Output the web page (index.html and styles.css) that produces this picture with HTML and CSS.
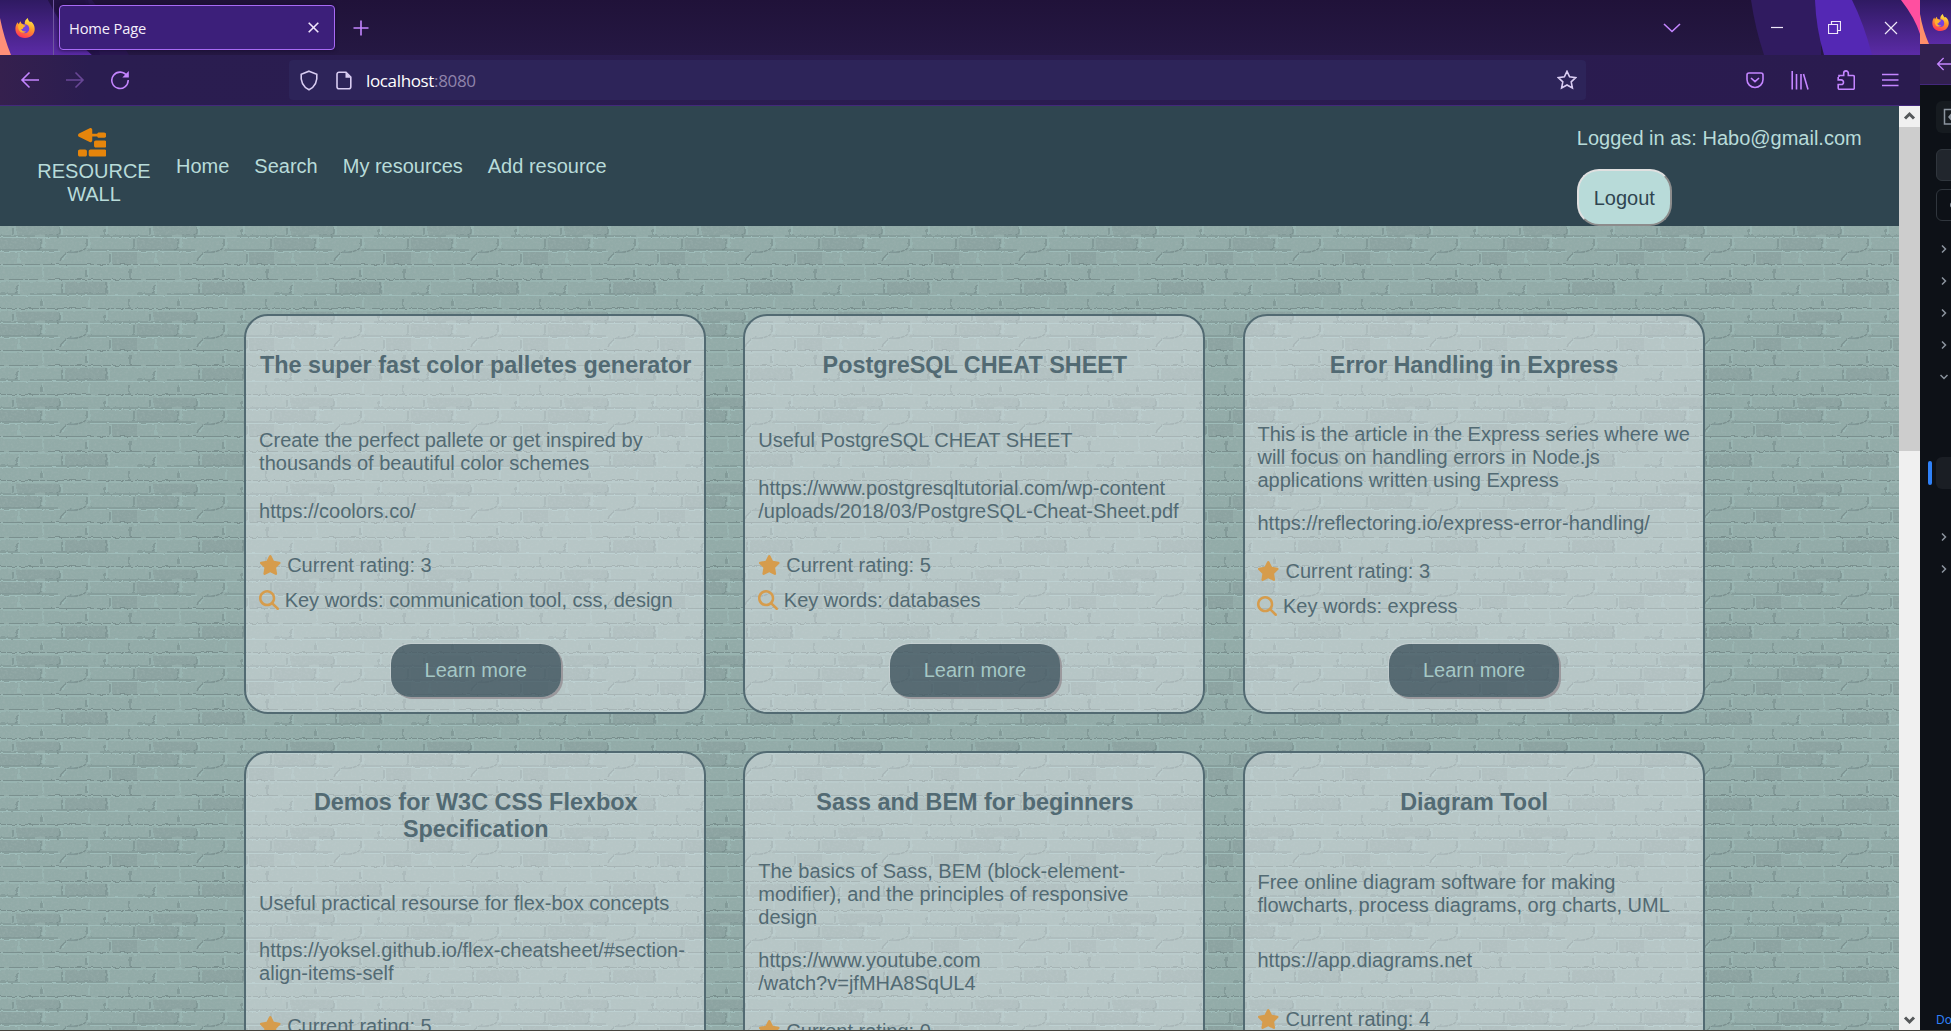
FILE: index.html
```html
<!DOCTYPE html>
<html lang="en">
<head>
<meta charset="utf-8">
<title>Home Page</title>
<link rel="stylesheet" href="styles.css">
</head>
<body>
<svg class="defs" aria-hidden="true">
  <defs>
    <linearGradient id="flame" x1="0.7" y1="0" x2="0.3" y2="1">
      <stop offset="0" stop-color="#fff04a"/><stop offset="0.45" stop-color="#ff9a2a"/><stop offset="1" stop-color="#ff2f5c"/>
    </linearGradient>
    <linearGradient id="violet" x1="0" y1="0" x2="0" y2="1"><stop offset="0" stop-color="#2f1a62"/><stop offset="1" stop-color="#5b2ba6"/></linearGradient>
    <symbol id="firefox" viewBox="0 0 20 20">
      <path fill="url(#flame)" d="M10 20C4 20 .4 16 .4 10.800c0-2.800.8-4.800 2.200-6.600l.9 2L5.400 3.300l1.200 2.500 3.200.4C9.400 3.600 10.600 1.300 12.800 0c.2 2 1 2.800 2.300 4l.9-.4c2.400 2 3.700 4.400 3.700 7.400C19.700 16.200 15.800 20 10 20z"/>
      <circle cx="9.800" cy="10.800" r="4.500" fill="#7442e0"/>
      <path fill="#ffb02e" d="M3.300 6.600C5 5.300 7 5.800 8 7c1 .3 2 .2 2.600.5-.5 1.200-2 1.600-2.500 2.400 0 1-1 1.100-2 1.200.8 2.200 3 2.900 5 2.300-2 2-5.200 1.600-6.800-.6-1.200-1.700-1.500-4-1-6.200z"/>
    </symbol>
    <symbol id="star" viewBox="0 0 576 512"><path fill="currentColor" d="M316.900 18C311.600 7 300.400 0 288.100 0s-23.400 7-28.800 18L195 150.300 51.400 171.500c-12 1.800-22 10.200-25.700 21.700s-.7 24.200 7.900 32.700L137.800 329 113.200 474.700c-2 12 3 24.200 12.900 31.300s23 8 33.800 2.300l128.300-68.500 128.300 68.500c10.800 5.700 23.900 4.900 33.800-2.300s14.900-19.300 12.900-31.300L438.500 329 542.700 225.900c8.600-8.500 11.700-21.200 7.900-32.700s-13.700-19.900-25.700-21.700L381.200 150.300 316.900 18z"/></symbol>
    <symbol id="search" viewBox="0 0 512 512"><path fill="currentColor" d="M416 208c0 45.900-14.900 88.300-40 122.700L502.600 457.400c12.500 12.500 12.500 32.800 0 45.300s-32.800 12.500-45.300 0L330.700 376c-34.400 25.200-76.800 40-122.700 40C93.100 416 0 322.900 0 208S93.100 0 208 0S416 93.100 416 208zM208 352a144 144 0 1 0 0-288 144 144 0 1 0 0 288z"/></symbol>
    <symbol id="arrow" viewBox="0 0 20 20"><path d="M19 10H2M9.500 2.500L2 10l7.500 7.500"/></symbol>
  </defs>
</svg>
<div class="desktop">
  <div class="browser">
    <div class="tabs">
      <svg class="art" viewBox="0 0 160 55" width="160" height="55">
        <path fill="#2a1750" d="M85 0h7q20 25 37 55H95z"/>
        <path fill="url(#violet)" d="M0 0h48q18 30 44 55H0z"/>
        <path fill="#24134a" opacity=".8" d="M48 0h40l12 55H92Q62 30 48 0z"/>
        <path fill="#ff8f78" d="M0 18q4 20 11 37H0z"/>
      </svg>
      <svg class="art art-right" viewBox="0 0 180 55" width="180" height="55">
        <path fill="#301b60" d="M11 0h70v55H24Q15 28 11 0z"/>
        <path fill="#5428b4" d="M75 0h40l25 55H84Q76 28 75 0z"/>
        <path fill="url(#violet)" d="M112 0h68v55h-48Q124 24 112 0z"/>
        <path fill="#ff4fa0" d="M161 0h19v34Q175 18 161 0z"/>
      </svg>
      <div class="pinned"><svg width="20" height="20"><use href="#firefox"/></svg></div>
      <div class="tab">
        <span>Home Page</span>
        <svg class="line" width="11" height="11" viewBox="0 0 11 11"><path d="M.7.700l9.600 9.600M10.300.7L.7 10.300"/></svg>
      </div>
      <svg class="line plus" width="16" height="16" viewBox="0 0 16 16"><path d="M8 .5v15M.5 8h15"/></svg>
      <div class="window-controls">
        <svg class="line" width="18" height="10" viewBox="0 0 18 10"><path d="M1 1l8 7.500L17 1"/></svg>
        <svg class="line" width="12" height="12" viewBox="0 0 12 12"><path d="M0 5.500h12"/></svg>
        <svg class="line" width="13" height="13" viewBox="0 0 13 13"><path d="M3.500 3.500v-3h9v9h-3M.5 3.500h9v9h-9z"/></svg>
        <svg class="line" width="14" height="14" viewBox="0 0 14 14"><path d="M1 1l12 12M13 1L1 13"/></svg>
      </div>
    </div>
    <div class="toolbar">
      <div class="nav-buttons">
        <svg width="20" height="20"><use href="#arrow"/></svg>
        <svg class="dim flip" width="20" height="20"><use href="#arrow"/></svg>
        <svg width="20" height="20" viewBox="0 0 20 20"><path d="M17 6A8.200 8.200 0 1 0 18.200 10"/><path class="solid" d="M18.800 1v6.500h-6.500z"/></svg>
      </div>
      <div class="url">
        <svg width="20" height="21" viewBox="0 0 20 21"><path d="M10 1.200l7.800 3c.7 6.500-1.300 12.500-7.800 15.600C3.500 16.700 1.500 10.700 2.200 4.200z"/></svg>
        <svg width="16" height="19" viewBox="0 0 16 19"><path d="M3 1.200h7L14.800 6v9.800a2 2 0 0 1-2 2H3a2 2 0 0 1-2-2V3.200a2 2 0 0 1 2-2z"/><path class="solid" d="M9.500 1l5.500 5.700H9.500z"/></svg>
        <span class="address">localhost<span>:8080</span></span>
        <svg class="bookmark" width="20" height="20" viewBox="0 0 20 20"><path d="M10 1.300l2.600 5.500 6.100.8-4.500 4.200 1.200 6.200-5.400-3-5.400 3 1.200-6.200L1.300 7.600l6.100-.8z"/></svg>
      </div>
      <div class="tools">
        <svg width="18" height="17" viewBox="0 0 18 17"><path d="M3 1h12a2 2 0 0 1 2 2v4.500a8 8 0 0 1-16 0V3a2 2 0 0 1 2-2zM5 6l4 3.700L13 6"/></svg>
        <svg width="18" height="19" viewBox="0 0 18 19"><path d="M1.200 0v18.500M5.500 3v15.500M10 3v15.500M12.500 3l4.500 15.500"/></svg>
        <svg width="18" height="20" viewBox="0 0 18 20"><path d="M2 7V5.500h4.700V3.200a2.300 2.300 0 0 1 4.600 0v2.300H16a1.300 1.300 0 0 1 1.300 1.300V18a1.300 1.300 0 0 1-1.300 1.300H2.500A1.300 1.300 0 0 1 1.200 18v-3.500h3a2.300 2.300 0 0 0 0-4.600h-3V7"/></svg>
        <svg width="17" height="14" viewBox="0 0 17 14"><path d="M0 1.500h16.500M0 7h16.500M0 12.500h16.500"/></svg>
      </div>
    </div>
    <div class="viewport">
      <div class="page">
        <header class="site-header">
          <a class="logo"><svg width="28.500" height="28.500" viewBox="0 0 512 512"><path fill="currentColor" d="M240.800 4.800C250.300 10.600 256 20.900 256 32v72h89c3.600-13.800 16.100-24 31-24h88c26.500 0 48 21.500 48 48s-21.500 48-48 48H376c-14.900 0-27.400-10.200-31-24H256v72c0 11.100-5.700 21.400-15.200 27.200s-21.200 6.400-31.100 1.400l-192-96C6.800 151.200 0 140.100 0 128s6.800-23.200 17.700-28.600l192-96c9.900-5 21.700-4.400 31.100 1.400zM288 256c0-17.700 14.300-32 32-32H480c17.700 0 32 14.300 32 32v64c0 17.700-14.300 32-32 32H320c-17.700 0-32-14.300-32-32V256zM32 384h96c17.700 0 32 14.300 32 32v64c0 17.700-14.300 32-32 32H32c-17.700 0-32-14.300-32-32V416c0-17.700 14.300-32 32-32zm192 0H480c17.700 0 32 14.300 32 32v64c0 17.700-14.300 32-32 32H224c-17.700 0-32-14.300-32-32V416c0-17.700 14.300-32 32-32z"/></svg><span>RESOURCE<br>WALL</span></a>
          <nav><a>Home</a><a>Search</a><a>My resources</a><a>Add resource</a></nav>
          <div class="account"><span>Logged in as: Habo@gmail.com</span><button class="logout">Logout</button></div>
        </header>
        <main class="wall">
          <article class="card">
            <h3>The super fast color palletes generator</h3>
            <p>Create the perfect pallete or get inspired by thousands of beautiful color schemes</p>
            <a>https://coolors.co/</a>
            <div class="meta">
              <div><svg class="star"><use href="#star"/></svg> Current rating: 3</div>
              <div><svg class="glass"><use href="#search"/></svg> Key words: communication tool, css, design</div>
            </div>
            <button>Learn more</button>
          </article>
          <article class="card">
            <h3>PostgreSQL CHEAT SHEET</h3>
            <p>Useful PostgreSQL CHEAT SHEET</p>
            <a>https://www.postgresqltutorial.com/wp-content<wbr>/uploads/2018/03/PostgreSQL-Cheat-Sheet.pdf</a>
            <div class="meta">
              <div><svg class="star"><use href="#star"/></svg> Current rating: 5</div>
              <div><svg class="glass"><use href="#search"/></svg> Key words: databases</div>
            </div>
            <button>Learn more</button>
          </article>
          <article class="card">
            <h3>Error Handling in Express</h3>
            <p>This is the article in the Express series where we will focus on handling errors in Node.js applications written using Express</p>
            <a>https://reflectoring.io/express-error-handling/</a>
            <div class="meta">
              <div><svg class="star"><use href="#star"/></svg> Current rating: 3</div>
              <div><svg class="glass"><use href="#search"/></svg> Key words: express</div>
            </div>
            <button>Learn more</button>
          </article>
          <article class="card">
            <h3>Demos for W3C CSS Flexbox Specification</h3>
            <p>Useful practical resourse for flex-box concepts</p>
            <a>https://yoksel.github.io/flex-cheatsheet/#section-<wbr>align-items-self</a>
            <div class="meta">
              <div><svg class="star"><use href="#star"/></svg> Current rating: 5</div>
              <div><svg class="glass"><use href="#search"/></svg> Key words: css</div>
            </div>
            <button>Learn more</button>
          </article>
          <article class="card">
            <h3>Sass and BEM for beginners</h3>
            <p>The basics of Sass, BEM (block-element-modifier), and the principles of responsive design</p>
            <a>https://www.youtube.com<br>/watch?v=jfMHA8SqUL4</a>
            <div class="meta">
              <div><svg class="star"><use href="#star"/></svg> Current rating: 0</div>
              <div><svg class="glass"><use href="#search"/></svg> Key words: css</div>
            </div>
            <button>Learn more</button>
          </article>
          <article class="card">
            <h3>Diagram Tool</h3>
            <p>Free online diagram software for making flowcharts, process diagrams, org charts, UML</p>
            <a>https://app.diagrams.net</a>
            <div class="meta">
              <div><svg class="star"><use href="#star"/></svg> Current rating: 4</div>
              <div><svg class="glass"><use href="#search"/></svg> Key words: design</div>
            </div>
            <button>Learn more</button>
          </article>
        </main>
      </div>
      <div class="scrollbar">
        <svg width="21" height="21" viewBox="0 0 21 21"><path d="M6 12.500l4.500-4.500 4.500 4.500"/></svg>
        <div class="thumb"></div>
        <svg class="down" width="21" height="21" viewBox="0 0 21 21"><path d="M6 8.500l4.500 4.500L15 8.500"/></svg>
      </div>
    </div>
  </div>
  <aside class="neighbor">
    <div class="n-tabs">
      <svg class="art" viewBox="0 0 31 44" width="31" height="44"><rect width="31" height="44" fill="url(#violet)"/><path fill="#ff8f6a" d="M0 14q3 17 9 30H0z"/></svg>
      <svg class="n-fox" width="17" height="17"><use href="#firefox"/></svg>
    </div>
    <div class="n-bar"><svg width="16" height="16"><use href="#arrow"/></svg></div>
    <div class="n-body">
      <div class="box filled"><svg width="16" height="18" viewBox="0 0 16 18"><path d="M16 1.500H1.500v14.500H16M9 5.500L6 9l3 3.500M6 9h8"/></svg></div>
      <div class="box outlined raised"></div>
      <div class="box outlined"><span class="dot"></span></div>
      <ul>
        <li><svg viewBox="0 0 8 8"><path d="M2 .5L5.500 4 2 7.500"/></svg></li>
        <li><svg viewBox="0 0 8 8"><path d="M2 .5L5.500 4 2 7.500"/></svg></li>
        <li><svg viewBox="0 0 8 8"><path d="M2 .5L5.500 4 2 7.500"/></svg></li>
        <li><svg viewBox="0 0 8 8"><path d="M2 .5L5.500 4 2 7.500"/></svg></li>
        <li><svg viewBox="0 0 8 8"><path d="M.5 2L4 5.500 7.500 2"/></svg></li>
      </ul>
      <div class="current"></div>
      <ul>
        <li><svg viewBox="0 0 8 8"><path d="M2 .5L5.500 4 2 7.500"/></svg></li>
        <li><svg viewBox="0 0 8 8"><path d="M2 .5L5.500 4 2 7.500"/></svg></li>
      </ul>
      <span class="doc">Do</span>
    </div>
  </aside>
</div>
</body>
</html>
```
FILE: styles.css
```css
* { box-sizing: border-box; }
body { margin: 0; overflow: hidden; background: #0d1117; }
.defs { position: absolute; width: 0; height: 0; }
button { font: inherit; }
svg { flex: none; }

.desktop { display: flex; width: 1951px; height: 1031px; overflow: hidden; border-bottom: 1px solid #46443f; }
.browser { display: flex; flex-direction: column; width: 1920px; font-family: "Open Sans", "Noto Sans", sans-serif; }

/* Tab strip */
.tabs { position: relative; display: flex; align-items: center; height: 55px; background: linear-gradient(#201239, #251843); }
.tabs > :not(.art) { position: relative; }
.art { position: absolute; left: 0; top: 0; }
.art-right { left: auto; right: 0; }
.line { fill: none; stroke-width: 1.6; }
.pinned { display: flex; align-items: center; width: 54px; height: 55px; padding-left: 15px; border-right: 1px solid #6f55a0; }
.tab { display: flex; align-items: center; justify-content: space-between; width: 276px; height: 45px; margin-left: 5px; padding: 0 15px 0 9px; border: 1px solid #a86af5; border-radius: 4px; background: #3c1f7a; color: #f4eefb; font-size: 14.700px; letter-spacing: -.15px; box-shadow: 0 0 4px #170b30; }
.tab svg { stroke: #f0e6fb; }
.plus { margin-left: 18px; stroke: #c485ff; }
.window-controls { display: flex; align-items: center; margin-left: auto; padding-right: 22px; stroke: #eee8f8; }
.window-controls svg { stroke-width: 1.200; }
.window-controls svg:nth-child(1) { margin-right: 90px; stroke: #c485ff; stroke-width: 1.600; }
.window-controls svg:nth-child(2) { margin-right: 45px; }
.window-controls svg:nth-child(3) { margin-right: 43px; }

/* Navigation toolbar */
.toolbar { display: flex; align-items: center; height: 51px; padding: 0 21px 0 20px; border-bottom: 1px solid #43287c; background: linear-gradient(90deg, #35204e, #2a1d50 90px, #2a1b4f); stroke: #c485ff; stroke-width: 1.600; fill: none; }
.toolbar .solid { fill: #c485ff; stroke: none; }
.nav-buttons { display: flex; gap: 25px; width: 269px; }
.dim { opacity: .4; }
.flip { transform: scaleX(-1); }
.url { display: flex; align-items: center; width: 1297px; height: 40px; padding: 0 9px 0 10px; border-radius: 4px; background: #2d2459; stroke: #d9cdf2; }
.url svg + svg { margin-left: 17px; }
.url .solid { fill: #d9cdf2; }
.address { margin-left: 14px; color: #fff; font-size: 17px; letter-spacing: -.35px; }
.address span { color: #8f83ab; }
.bookmark { margin-left: auto; }
.tools { display: flex; align-items: center; gap: 27.500px; margin-left: auto; }

/* Page */
.viewport { display: flex; flex: 1; min-height: 0; }
.page { width: 1899px; overflow: hidden; font: 20px/23px "Liberation Sans", Arial, sans-serif; color: #2f4550; }
.site-header { display: flex; align-items: center; height: 120px; padding: 1px 37.300px 0 37px; background: #2f4550; color: #b8dbd9; }
.logo { width: 114px; padding-top: 1px; text-align: center; }
.logo svg { display: block; margin: 0 auto 3px; color: #e6850b; position: relative; left: -2px; }
.logo span { display: block; }
.site-header nav { display: flex; gap: 25px; margin-left: 25px; }
.account { display: flex; flex-direction: column; align-items: flex-start; gap: 19px; margin-left: auto; padding-top: 20px; align-self: flex-start; }
.logout { height: 57px; width: 95px; padding: 1px 0 0; border: 2px outset #e0e0e0; border-radius: 22px; background: #b8dbd9; color: #2f4550; }

.wall {
  display: grid; grid-template-columns: repeat(3, 462px); gap: 37px 37.200px; align-content: start;
  height: 1000px; padding: 88px 0 0 244.300px;
  background: #8fa8a5 url("data:image/svg+xml,%3Csvg xmlns='http://www.w3.org/2000/svg' width='137' height='86'%3E%3Cfilter id='n' x='0' y='0' width='1' height='1'%3E%3CfeTurbulence type='fractalNoise' baseFrequency='.35 .5' numOctaves='3' seed='4' stitchTiles='stitch'/%3E%3CfeColorMatrix values='0 0 0 0 .36 0 0 0 0 .46 0 0 0 0 .45 2.200 0 0 0 -1'/%3E%3C/filter%3E%3Cfilter id='r' x='-5%25' y='-5%25' width='110%25' height='110%25' color-interpolation-filters='sRGB'%3E%3CfeTurbulence type='fractalNoise' baseFrequency='.2' numOctaves='2' seed='9'/%3E%3CfeDisplacementMap in='SourceGraphic' scale='3' xChannelSelector='R' yChannelSelector='G'/%3E%3C/filter%3E%3Crect width='137' height='86' fill='%2392aba8'/%3E%3Cg fill='%23859b99' opacity='.5'%3E%3Crect x='62' y='55' width='45' height='13'/%3E%3Crect x='0' y='12' width='40' height='12'/%3E%3Crect x='14' y='0' width='45' height='9'/%3E%3Crect x='112' y='26' width='25' height='12'/%3E%3C/g%3E%3Crect width='137' height='86' filter='url(%23n)' opacity='.42'/%3E%3Cg fill='none' filter='url(%23r)' opacity='.85'%3E%3Cg stroke='%23a0bfbc' stroke-width='1'%3E%3Cpath d='M-5 11.500H142M-5 25.500H60M90 25.500H142M-5 40H142M-5 55H142M-5 69.500H142M-5 84H142'/%3E%3Cpath d='M44 12v10M89 12v10M19 27v10M63 34q3-8 12-9M111 27v10M43 42v10M88 42v10M19 56v11M64 56v11M109 56v11M42 71v10M89 71v10M15 0v9M62 0v9M107 0v9'/%3E%3C/g%3E%3Cg stroke='%23758b8a' stroke-width='1'%3E%3Cpath d='M-5 10H35M45 10H88M100 10H142M-5 24H58M88 24H142M0 38.500H142M-5 53.500H38M48 53.500H142M-5 68H20M30 68H106M-5 82.500H90M98 82.500H142'/%3E%3Cpath stroke-width='1.300' d='M41 13v9l-3 2M87 13v7l-3 4M134 13v10M60 35q3-7 10-9 9 1 14-3M110 28v8M130 43v9M86 44v7M17 59v7l-2 1M62 58v9M106 57v10M129 73v9M41 73v7M13 2v6M60 2v5l-3 3M105 3v6'/%3E%3C/g%3E%3C/g%3E%3C/svg%3E");
}
.card { display: flex; flex-direction: column; align-items: flex-start; justify-content: space-between; min-height: 400px; padding: 13.100px 12px 10.900px 12.800px; border: 2px solid #526a72; border-radius: 24px; background: rgba(244, 244, 249, .37); color: #526a73; }
.card h3 { align-self: center; margin: 23.400px 0; font-size: 23.400px; line-height: 27px; text-align: center; }
.card p { margin: 20px 0; }
.meta { margin-top: 25px; }
.meta div + div { margin-top: 12px; }
.meta svg { height: 20px; vertical-align: -2.500px; color: #d69c4c; }
.star { width: 22.500px; }
.glass { width: 20px; }
.card button { align-self: center; width: 170px; height: 53px; margin: 26px 0 4px; padding: 0; border: 0; border-radius: 20px; background: rgba(47, 69, 80, .7); box-shadow: 2px 2px 0 rgba(145, 138, 143, .75), -1px -1px 0 rgba(205, 212, 214, .6); color: #a5c7c5; }

/* Scrollbar */
.scrollbar { display: flex; flex-direction: column; width: 21px; background: #f0f0f0; }
.scrollbar path { fill: none; stroke: #55585a; stroke-width: 3; }
.thumb { height: 324px; background: #cdcdcd; }
.down { margin-top: auto; }

/* Second window, mostly off screen */
.neighbor { display: flex; flex-direction: column; width: 31px; overflow: hidden; background: #0d1117; }
.n-tabs { position: relative; height: 44px; padding: 14px 0 0 12px; }
.n-fox { position: relative; display: block; }
.n-bar { display: flex; align-items: center; height: 41px; padding-left: 16px; border-bottom: 1px solid #43287c; background: #31204f; stroke: #c485ff; stroke-width: 1.600; fill: none; }
.n-body { display: flex; flex-direction: column; flex: 1; padding: 16px 0 0 16px; }
.box { display: flex; align-items: center; flex: none; width: 40px; height: 32px; padding-left: 7px; border-radius: 6px; stroke: #8b949e; fill: none; stroke-width: 1.500; }
.filled { background: #161b20; }
.outlined { margin-top: 8px; border: 1px solid #30363d; }
.raised { margin-top: 16px; background: #21262d; }
.dot { width: 5px; height: 6px; margin-left: 6px; border-radius: 50%; background: #8b949e; }
.n-body ul { margin: 0; padding: 0; list-style: none; }
.n-body .outlined + ul { margin-top: 12px; }
.n-body li { display: flex; align-items: center; height: 32px; padding-left: 4px; }
.n-body li svg { width: 8px; height: 8px; fill: none; stroke: #8b949e; stroke-width: 1.500; }
.current { flex: none; width: 40px; height: 32px; margin: 64px 0 32px; border-radius: 6px; background: #1a1e24; position: relative; }
.current::before { content: ""; position: absolute; left: -8px; top: 4px; width: 4px; height: 24px; border-radius: 2px; background: #2f81f7; }
.doc { margin: auto 0 2px; color: #2f81f7; font: 12px/16px "Noto Sans", sans-serif; }
```
